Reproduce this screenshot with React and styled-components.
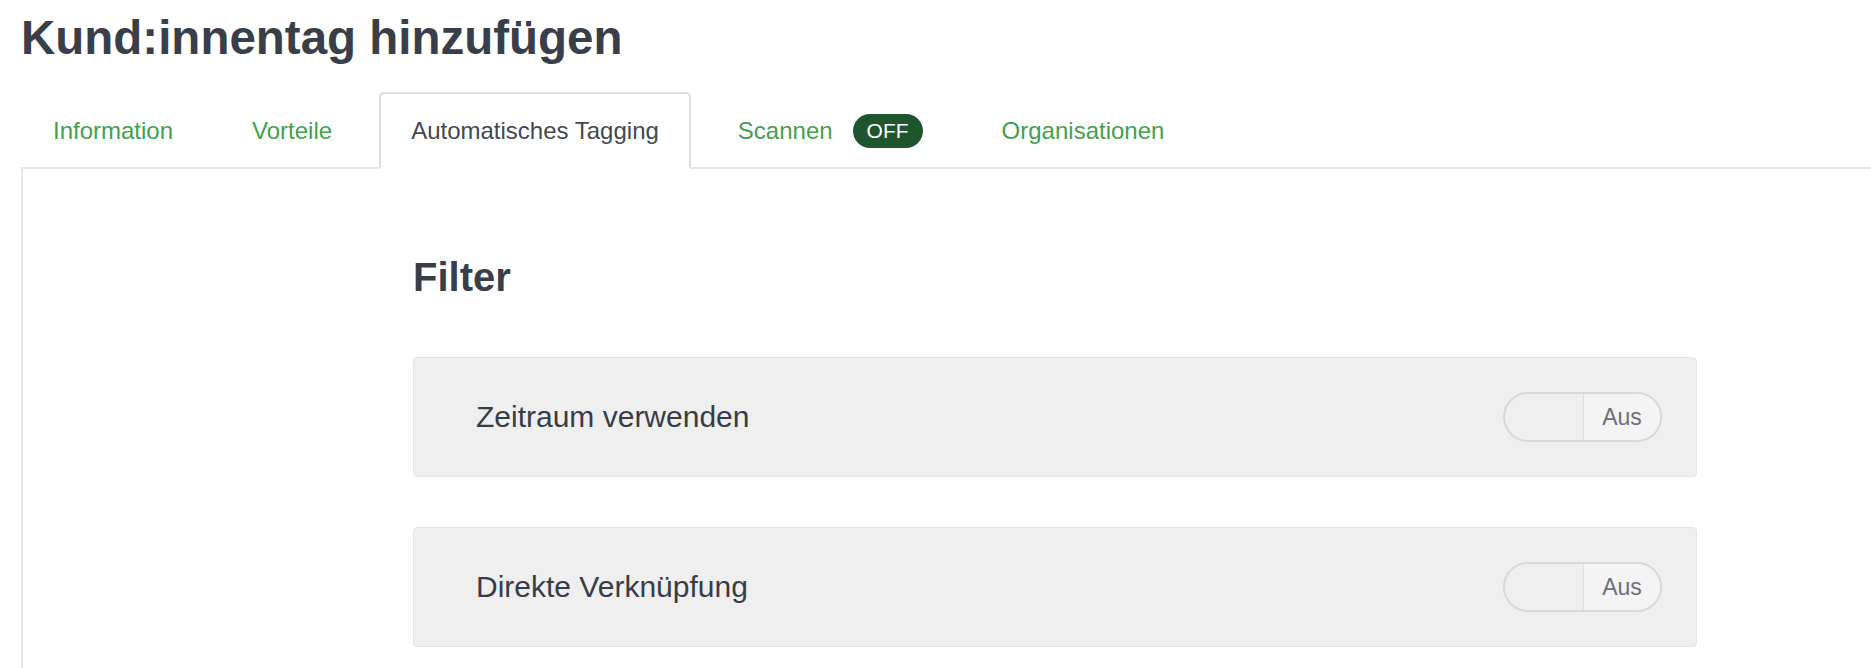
import React from "react";
import styled, { createGlobalStyle } from "styled-components";

const GlobalStyle = createGlobalStyle`
    body {
        margin: 0;
        background: #fff;
        font-family: "Liberation Sans", Arial, sans-serif;
        overflow: hidden;
    }
`;

const Page = styled.div`
    width: 1900px;
    padding: 9px 0 0 21px;
    box-sizing: border-box;
`;

const Title = styled.h1`
    margin: 0;
    font-size: 47.5px;
    line-height: 1.2;
    font-weight: 700;
    color: #3a3e49;
`;

const TabRow = styled.div`
    display: flex;
    gap: 15px;
    margin-top: 26px;
    margin-bottom: -2px;
    position: relative;
    z-index: 1;
`;

const Tab = styled.div`
    display: flex;
    align-items: center;
    gap: 20px;
    height: 77px;
    box-sizing: border-box;
    padding: 0 30px;
    font-size: 24px;
    color: ${(props) => (props.active ? "#444851" : "#43a04e")};
    background: ${(props) => (props.active ? "#fff" : "transparent")};
    border: 2px solid ${(props) => (props.active ? "#dcdcdc" : "transparent")};
    border-bottom-color: ${(props) => (props.active ? "#fff" : "transparent")};
    border-radius: 5px 5px 0 0;
    cursor: pointer;
`;

const Pill = styled.span`
    display: inline-flex;
    align-items: center;
    height: 34px;
    padding: 0 14px;
    border-radius: 17px;
    background: #1f552c;
    color: #fff;
    font-size: 21px;
`;

const Panel = styled.div`
    border-top: 2px solid #e6e6e6;
    border-left: 2px solid #e6e6e6;
    padding: 84px 0 40px 390px;
`;

const Section = styled.div`
    width: 1284px;
`;

const Heading = styled.h2`
    margin: 0 0 56px;
    font-size: 40px;
    line-height: 1.2;
    font-weight: 700;
    color: #3a3e49;
`;

const Card = styled.div`
    display: flex;
    align-items: center;
    justify-content: space-between;
    height: 120px;
    box-sizing: border-box;
    padding: 0 34px 0 62px;
    margin-bottom: 50px;
    background: #efefef;
    border: 1px solid #e4e4e4;
    border-radius: 4px;
`;

const Label = styled.span`
    font-size: 30px;
    color: #383c47;
`;

const Toggle = styled.div`
    display: flex;
    width: 159px;
    height: 50px;
    box-sizing: border-box;
    border: 2px solid #d8d8d8;
    border-radius: 25px;
    overflow: hidden;
`;

const Knob = styled.div`
    width: 78px;
    border-right: 1px solid #e0e0e0;
`;

const State = styled.div`
    flex: 1;
    display: flex;
    align-items: center;
    justify-content: center;
    background: #f4f4f4;
    font-size: 23px;
    color: #6c707a;
`;

const tabs = [
    { label: "Information" },
    { label: "Vorteile" },
    { label: "Automatisches Tagging", active: true },
    { label: "Scannen", badge: "OFF" },
    { label: "Organisationen" },
];

const filters = ["Zeitraum verwenden", "Direkte Verknüpfung"];

const App = () => {
    return (
        <Page>
            <GlobalStyle />
            <Title>Kund:innentag hinzufügen</Title>
            <TabRow>
                {tabs.map((tab, i) => (
                    <Tab key={i} active={tab.active}>
                        {tab.label}
                        {tab.badge && <Pill>{tab.badge}</Pill>}
                    </Tab>
                ))}
            </TabRow>
            <Panel>
                <Section>
                    <Heading>Filter</Heading>
                    {filters.map((f, i) => (
                        <Card key={i}>
                            <Label>{f}</Label>
                            <Toggle>
                                <Knob />
                                <State>Aus</State>
                            </Toggle>
                        </Card>
                    ))}
                </Section>
            </Panel>
        </Page>
    );
};

export default App;
